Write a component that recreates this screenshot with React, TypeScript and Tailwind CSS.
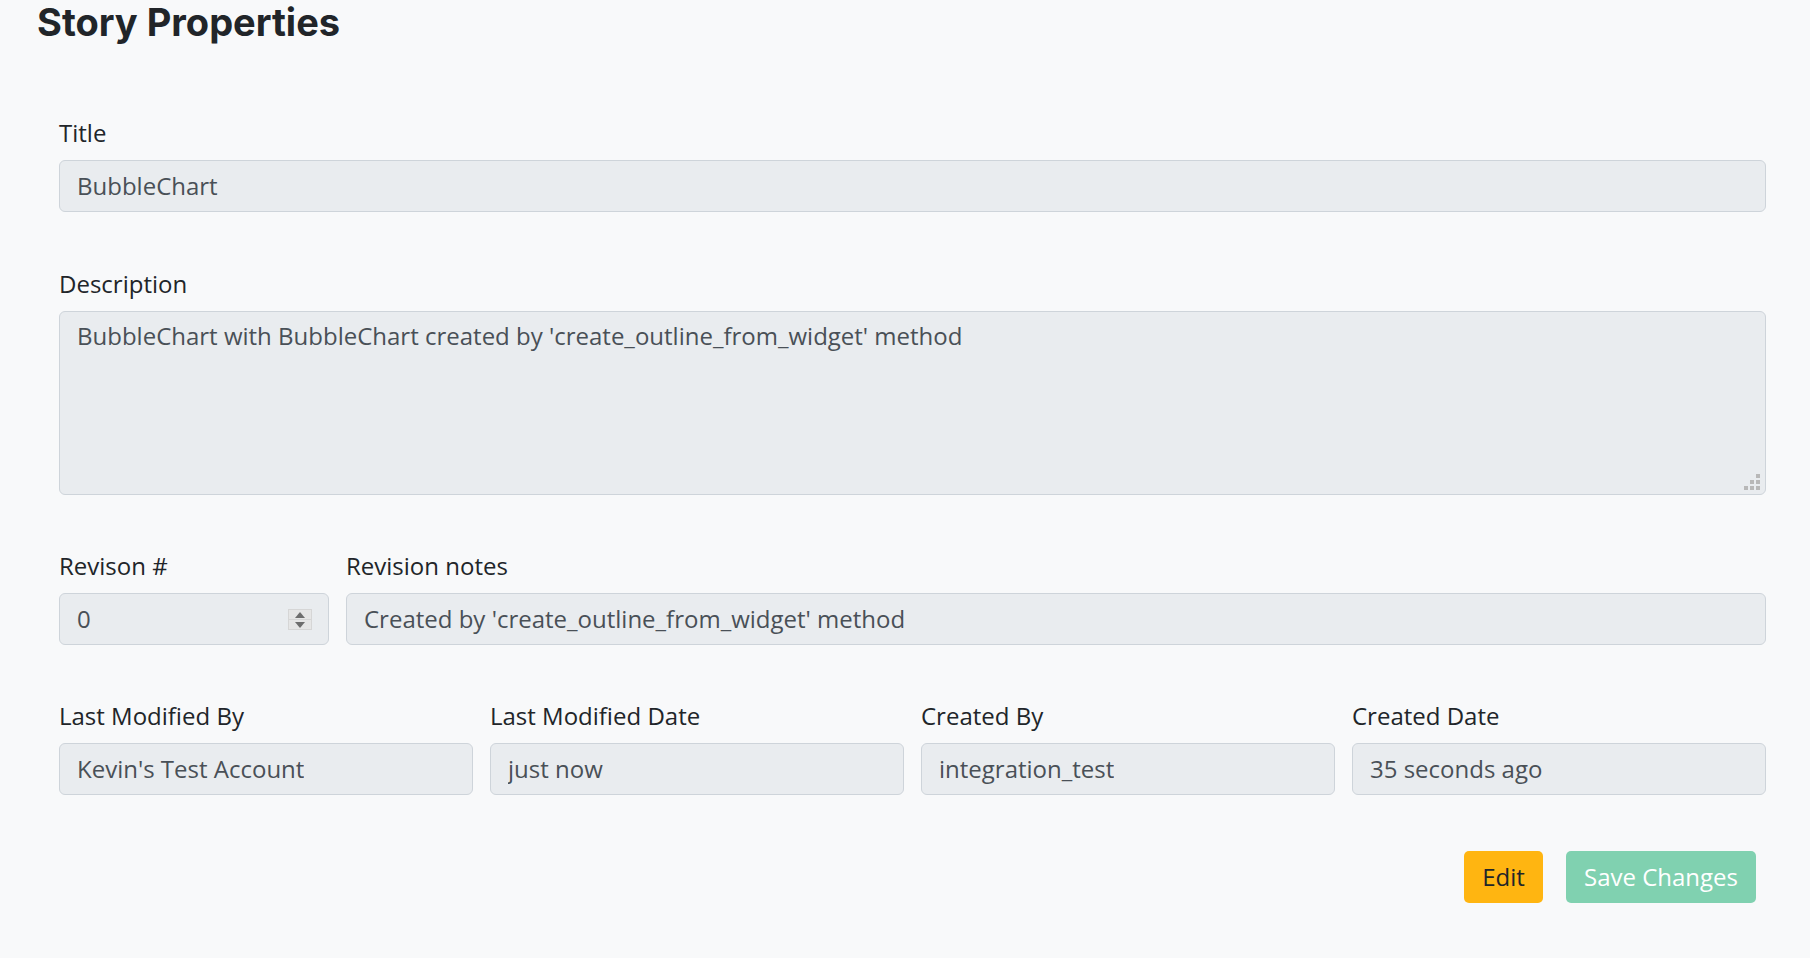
import React from 'react';

const fieldFont = { fontFamily: '"Open Sans", "Liberation Sans", sans-serif' };

const Campo = ({ rotulo, valor, extra }: { rotulo: string; valor: string; extra?: React.ReactNode }) => (
  <div className="flex flex-col">
    <label className="block text-[24px] leading-[30px] mb-[12px] text-[#212529]">{rotulo}</label>
    <div className="relative h-[52px] flex items-center px-[17px] rounded-[6px] border border-[#ced4da] bg-[#e9ecef] text-[24px] text-[#495057]">
      <span className="truncate">{valor}</span>
      {extra}
    </div>
  </div>
);

const Spinner = () => (
  <div className="absolute right-[16px] top-[15px] w-[24px] h-[21px] border border-[#d6d6d6] bg-[#e6e6e6] flex flex-col">
    <div className="flex-1 flex items-center justify-center border-b border-[#d6d6d6]">
      <svg width="10" height="6" viewBox="0 0 10 6"><polygon points="5,0 10,6 0,6" fill="#6e6e6e" /></svg>
    </div>
    <div className="flex-1 flex items-center justify-center">
      <svg width="10" height="6" viewBox="0 0 10 6"><polygon points="0,0 10,0 5,6" fill="#6e6e6e" /></svg>
    </div>
  </div>
);

const Redimensionar = () => (
  <svg className="absolute right-[5px] bottom-[4px]" width="16" height="16" viewBox="0 0 16 16">
    <rect x="12" y="0" width="4" height="4" fill="#b8b8b8" />
    <rect x="6" y="6" width="4" height="4" fill="#b8b8b8" />
    <rect x="12" y="6" width="4" height="4" fill="#b8b8b8" />
    <rect x="0" y="12" width="4" height="4" fill="#b8b8b8" />
    <rect x="6" y="12" width="4" height="4" fill="#b8b8b8" />
    <rect x="12" y="12" width="4" height="4" fill="#b8b8b8" />
  </svg>
);

export default function App() {
  return (
    <div className="min-h-screen bg-[#f8f9fa] pl-[37px] pr-[44px]" style={fieldFont}>
      <h2
        className="text-[38px] leading-[45px] font-bold text-[#212529]"
        style={{ fontFamily: 'Inter, "Liberation Sans", sans-serif' }}
      >
        Story Properties
      </h2>

      <div className="pl-[22px] pt-[73px]">
        <div className="mb-[57px]">
          <Campo rotulo="Title" valor="BubbleChart" />
        </div>

        <div className="mb-[56px]">
          <label className="block text-[24px] leading-[30px] mb-[12px] text-[#212529]">Description</label>
          <div className="relative h-[184px] px-[17px] pt-[9px] rounded-[6px] border border-[#ced4da] bg-[#e9ecef] text-[24px] leading-[30px] text-[#495057]">
            BubbleChart with BubbleChart created by 'create_outline_from_widget' method
            <Redimensionar />
          </div>
        </div>

        <div className="grid grid-cols-[270px_1fr] gap-x-[17px] mb-[56px]">
          <Campo rotulo="Revison #" valor="0" extra={<Spinner />} />
          <Campo rotulo="Revision notes" valor="Created by 'create_outline_from_widget' method" />
        </div>

        <div className="grid grid-cols-4 gap-x-[17px] mb-[56px]">
          <Campo rotulo="Last Modified By" valor="Kevin's Test Account" />
          <Campo rotulo="Last Modified Date" valor="just now" />
          <Campo rotulo="Created By" valor="integration_test" />
          <Campo rotulo="Created Date" valor="35 seconds ago" />
        </div>

        <div className="flex justify-end gap-[23px] pr-[10px]">
          <button className="h-[52px] w-[79px] rounded-[5px] bg-[#ffb511] text-[24px] text-[#212529]">Edit</button>
          <button className="h-[52px] w-[190px] rounded-[5px] bg-[#80d1b0] text-[24px] text-white">Save Changes</button>
        </div>
      </div>
    </div>
  );
}
